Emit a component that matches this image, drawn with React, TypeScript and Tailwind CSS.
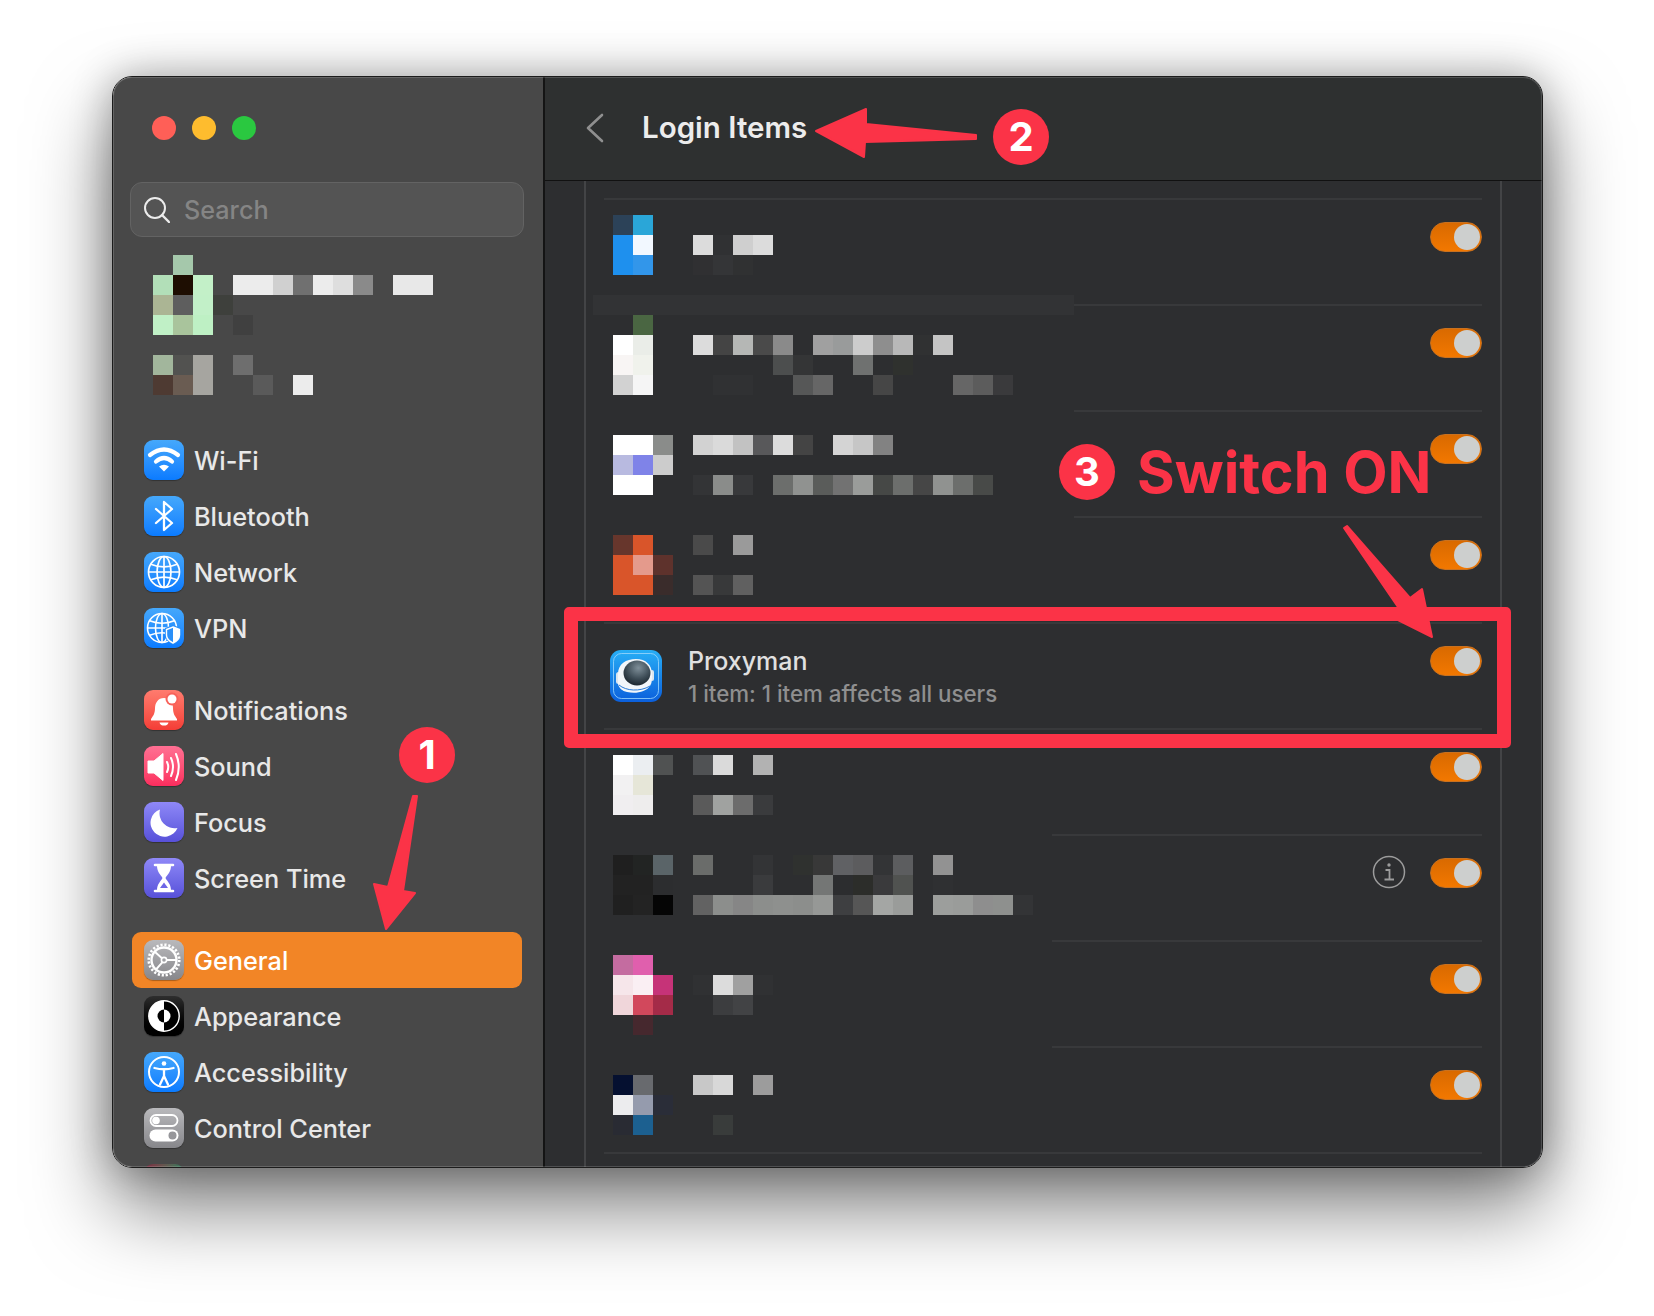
import React from "react";

const font = { fontFamily: "Inter, 'Noto Sans', sans-serif" };

function Mosaic({ rows }: { rows: string[] }) {
  return (
    <div className="grid auto-rows-[20px] grid-cols-[repeat(21,20px)]">
      {rows.flatMap((r, y) => {
        const toks = r.split(" ");
        const out = [];
        for (let x = 0; x < 21; x++) {
          const t = toks[x];
          out.push(<div key={`${y}-${x}`} style={t && t !== "." ? { backgroundColor: `#${t}` } : undefined} />);
        }
        return out;
      })}
    </div>
  );
}

const Glyph = ({ children }: { children: React.ReactNode }) => (
  <svg viewBox="0 0 40 40" className="absolute inset-0 h-10 w-10" fill="none" stroke="none">
    {children}
  </svg>
);

const IconBox = ({ cls, children }: { cls: string; children: React.ReactNode }) => (
  <div className={`relative h-10 w-10 shrink-0 rounded-[9px] shadow-[0_1px_1px_rgba(0,0,0,0.3)] ${cls}`}>
    <Glyph>{children}</Glyph>
  </div>
);

const GlobeLines = ({ cx, r, sw }: { cx: number; r: number; sw: number }) => (
  <g stroke="#fff" strokeWidth={sw} fill="none">
    <circle cx={cx} cy={20} r={r} />
    <ellipse cx={cx} cy={20} rx={r * 0.45} ry={r} />
    <path d={`M${cx} ${20 - r}V${20 + r}M${cx - r} 20H${cx + r}`} />
    <path d={`M${cx - r * 0.85} ${20 - r * 0.5}Q${cx} ${20 - r * 0.15} ${cx + r * 0.85} ${20 - r * 0.5}`} />
    <path d={`M${cx - r * 0.85} ${20 + r * 0.5}Q${cx} ${20 + r * 0.15} ${cx + r * 0.85} ${20 + r * 0.5}`} />
  </g>
);

const blue = "bg-linear-to-b from-[#45a8fb] to-[#0a7bff]";
const purple = "bg-linear-to-b from-[#8f88f7] to-[#5850d9]";
const grey = "bg-linear-to-b from-[#b9b9bc] to-[#87878b]";

const WifiI = () => (
  <IconBox cls={blue}>
    <path d="M6 15Q20 4 34 15" stroke="#fff" strokeWidth="4.2" strokeLinecap="round" />
    <path d="M12 21.5Q20 14.5 28 21.5" stroke="#fff" strokeWidth="4.2" strokeLinecap="round" />
    <path d="M20 31.5L15 26.5Q20 23 25 26.5Z" fill="#fff" />
  </IconBox>
);
const BtI = () => (
  <IconBox cls={blue}>
    <path d="M12 13L28 27L20 34V6L28 13L12 27" stroke="#fff" strokeWidth="2.3" strokeLinejoin="round" strokeLinecap="round" />
  </IconBox>
);
const NetI = () => (
  <IconBox cls={blue}>
    <GlobeLines cx={20} r={15.5} sw={1.7} />
  </IconBox>
);
const VpnI = () => (
  <IconBox cls={blue}>
    <GlobeLines cx={18} r={14.5} sw={1.6} />
    <path d="M29 17L37 20V27Q37 33 29 36.5Q21 33 21 27V20Z" fill="#2a8ff8" />
    <path d="M29 19L35.5 21.5V27Q35.5 32 29 35Q22.500 32 22.500 27V21.500Z" stroke="#fff" strokeWidth="1.4" />
    <path d="M29 19L35.5 21.5V27Q35.5 32 29 35Z" fill="#fff" />
  </IconBox>
);
const BellI = () => (
  <IconBox cls="bg-linear-to-b from-[#ff7b6e] to-[#f43c36]">
    <path d="M20 8C14 8 11 13 11 18C11 24 9 26 7 29V30.500H33V29C31 26 29 24 29 18C29 13 26 8 20 8Z" fill="#fff" />
    <path d="M15.500 32.500H24.500C24 35 22 35.500 20 35.500C18 35.500 16 35 15.500 32.500Z" fill="#fff" />
    <circle cx="28" cy="9" r="6.500" fill="#f8625a" />
    <circle cx="28" cy="9" r="4.500" fill="#fff" />
  </IconBox>
);
const SoundI = () => (
  <IconBox cls="bg-linear-to-b from-[#ff6f93] to-[#fb2c5e]">
    <path d="M4 15H10L19 7.500V34.500L10 27H4Z" fill="#fff" stroke="#fff" strokeLinejoin="round" />
    <path d="M23 16Q25.500 21 23 26M27 12Q31 21 27 30M32 8Q37.500 21 32 34" stroke="#fff" strokeWidth="2" strokeLinecap="round" />
  </IconBox>
);
const MoonI = () => (
  <IconBox cls={purple}>
    <path d="M16 7.500A14 14 0 1 0 33.500 26A15 15 0 0 1 16 7.500Z" fill="#fff" />
  </IconBox>
);
const GlassI = () => (
  <IconBox cls={purple}>
    <path d="M11 7H29M11 33H29" stroke="#fff" strokeWidth="2.6" strokeLinecap="round" />
    <path d="M13 8H27C27 14 23 17 21.500 20C23 23 27 26 27 32H13C13 26 17 23 18.500 20C17 17 13 14 13 8Z" fill="#fff" />
    <path d="M20 24.500L24 30H16Z" fill="#6d66e6" />
  </IconBox>
);
const GearI = () => (
  <IconBox cls={grey}>
    <circle cx="20" cy="20" r="12.500" stroke="#fff" strokeWidth="2.400" />
    <circle cx="20" cy="20" r="15.300" stroke="#fff" strokeWidth="2.600" strokeDasharray="2.200 1.800" />
    <circle cx="20" cy="20" r="2.600" stroke="#fff" strokeWidth="1.600" />
    <path d="M22.600 20H33M18 18.300L10.500 11.500M18.500 22.200L12 29.500" stroke="#fff" strokeWidth="1.900" />
  </IconBox>
);
const AppearI = () => (
  <IconBox cls="bg-linear-to-b from-[#2e2e2e] to-[#000]">
    <circle cx="20" cy="20" r="15.200" fill="#000" stroke="#fff" strokeWidth="1.400" />
    <path d="M20 4.800A15.200 15.200 0 0 0 20 35.200Z" fill="#fff" />
    <path d="M20 13.500A6.500 6.500 0 0 0 20 26.500Z" fill="#000" />
    <path d="M20 13.500A6.500 6.500 0 0 1 20 26.500Z" fill="#fff" />
  </IconBox>
);
const AccessI = () => (
  <IconBox cls={blue}>
    <circle cx="20" cy="20" r="15" stroke="#fff" strokeWidth="2" />
    <circle cx="20" cy="11.500" r="2.300" fill="#fff" />
    <path d="M10.500 16Q20 18.500 29.500 16M20 18V24M20 24L16 32.500M20 24L24 32.500" stroke="#fff" strokeWidth="2.300" strokeLinecap="round" />
  </IconBox>
);
const CtrlI = () => (
  <IconBox cls={grey}>
    <rect x="6.500" y="7" width="27" height="11" rx="5.500" stroke="#fff" strokeWidth="1.800" />
    <circle cx="12" cy="12.500" r="3.800" fill="#fff" />
    <rect x="5.500" y="21.500" width="29" height="12" rx="6" fill="#fff" />
    <circle cx="28.500" cy="27.500" r="4" fill="#96969a" />
  </IconBox>
);

const TextMosaicAvatar = [
  ". a5c8ab",
  "b2dfb8 1e0e02 c3f0c8 . ececec ececec d0d0d0 707070 ececec dedede 8a8a8a . e8e8e8 e8e8e8",
  "abb594 5e5e5e c2f0c8 3e403c",
  "c0f0c6 a9c49c bef0c4 . 404040",
  "",
  "a2b69c 525250 a6a5a0 . 6e6e6e",
  "4e3a32 6a5c52 a6a5a0 . . 5a5a5a . ececec",
];

const NavItem = ({ icon, label, active }: { icon: React.ReactNode; label: string; active?: boolean }) => (
  <div
    className={`ml-[19px] flex h-[56px] w-[390px] items-center gap-[10px] rounded-[9px] pl-[12px] text-[25.300px] font-[450] ${
      active ? "bg-[#f28526] text-white" : "text-[#e8e8e8]"
    }`}
  >
    {icon}
    <span className="pt-[2px]">{label}</span>
  </div>
);

const Toggle = () => (
  <div className="flex h-[30px] w-[52px] shrink-0 items-center justify-end rounded-full border border-[#c9711f] bg-linear-to-b from-[#d96a00] to-[#f27800] pr-px">
    <div className="h-[26px] w-[26px] rounded-full bg-[#cdcfce]" />
  </div>
);

const InfoIcon = () => (
  <svg viewBox="0 0 34 34" className="mr-[24px] mt-[-3px] h-[34px] w-[34px] shrink-0" fill="none" stroke="#9c9c9c">
    <circle cx="17" cy="17" r="15.500" strokeWidth="1.500" />
    <circle cx="17" cy="10" r="1.700" fill="#9c9c9c" stroke="none" />
    <path d="M13.500 15H17.500V24M12.500 24.500H22" strokeWidth="1.800" />
  </svg>
);

type Row = { sep: string; pad: string; rows: string[]; info?: boolean };

const rowsData: Row[] = [
  {
    sep: "ml-0",
    pad: "pt-[15px]",
    rows: [
      "2c4258 2aa6d8",
      "1e90ee f2f8ff . . dcdcdc 303133 cfcfcf dcdcdc",
      "1e90ee 3296ea . . 303032 343537 303132",
    ],
  },
  {
    sep: "ml-[470px]",
    pad: "pt-[9px]",
    rows: [
      ". 4a6642",
      "ffffff eaede8 . . dcdcdc 444444 b5b7b5 4a4a4a 8a8a8a . a0a0a0 999b9b cccccc 8e8e8e b8b8b8 303132 c4c4c4",
      "f8f5f4 f0f2ec . . . . . . 4c4e4e 343536 . . 6f7170 . 2f312e",
      "d2d2d2 f5f5f5 . . . 303133 303133 . . 565757 666666 . . 464646 . . . 666666 5c5c5c 3a3a3c",
    ],
  },
  {
    sep: "ml-[470px]",
    pad: "pt-[23px]",
    rows: [
      "ffffff ffffff 8a8c8a . d2d2d2 dadada c2c2c2 58585a dcdcdc 444444 . d4d4d4 c6c6c6 828282",
      "b8bae0 7f83e8 cccccc",
      "ffffff ffffff . . 333436 8a8c8a 38393b . 6c6e6c 909290 5a5c5a 727272 9a9c9a 464846 6c6e6c 464646 909290 6c6e6c 484a48",
    ],
  },
  {
    sep: "ml-[470px]",
    pad: "pt-[17px]",
    rows: [
      "67362c d9552a . . 4a4a4a . 9a9a9a",
      "d9552a e49a8c 5e322c",
      "d9552a d9552a 3a2c2b . 545454 38393a 606060",
    ],
  },
];

const rowsData2: Row[] = [
  {
    sep: "ml-0",
    pad: "pt-[25px]",
    rows: [
      "ffffff ebeef1 505252 . 505254 dadada . b2b2b2",
      "f2f1f2 e6e6d8",
      "f0eef0 eeeded . . 5a5a5a a0a2a0 6c6c6c 3a3b3d",
    ],
  },
  {
    sep: "ml-[448px]",
    pad: "pt-[19px]",
    info: true,
    rows: [
      "1f1f1f 222423 5a6468 . 6a6c6a . . 333436 . 2f312f 383838 606164 5c5c5e 333436 5c5d5f . 929292",
      "222222 222222 2c2d2f . . . . 3a3b3d . . 747675 2c2d2f 2c2d2a 3a3a3c 505250 . 2f3032",
      "202020 232323 050505 . 626262 8c8e8c 868686 8c8e8c 8e908e 8c8e8c 969896 3e3f41 565656 a4a6a4 9a9c9a . 9c9e9c 9a9c9a 8e8e8e 8e908e 333436",
    ],
  },
  {
    sep: "ml-[448px]",
    pad: "pt-[13px]",
    rows: [
      "c46ca0 e05fad",
      "f6e6ea faeff3 c63378 . 303133 dcdcdc a0a0a0 303133",
      "f0d6da d2485c a42b48 . . 3c3d3f 424345",
      ". 46282e",
    ],
  },
  {
    sep: "ml-[448px]",
    pad: "pt-[27px]",
    rows: [
      "051030 686a6e . . c8c8c8 d8d8d8 . 9c9c9c",
      "ececee 959bad 2a2d38",
      "292b33 1c6090 . . . 393c3b",
    ],
  },
];

const Sep = ({ cls }: { cls: string }) => <div className={`h-[2px] bg-[#38393b] ${cls}`} />;

const ListRow = ({ r }: { r: Row }) => (
  <div className="w-[878px]">
    <Sep cls={r.sep} />
    <div className="flex h-[104px] justify-between">
      <div className={`pl-[9px] ${r.pad}`}>
        <Mosaic rows={r.rows} />
      </div>
      <div className="flex items-start pt-[22px]">
        {r.info && <InfoIcon />}
        <Toggle />
      </div>
    </div>
  </div>
);

const ProxymanIcon = () => (
  <svg viewBox="0 0 52 52" className="h-[52px] w-[52px] shrink-0">
    <defs>
      <linearGradient id="pxBg" x1="0" y1="0" x2="0" y2="1">
        <stop offset="0" stopColor="#27aef6" />
        <stop offset="1" stopColor="#0b5fdc" />
      </linearGradient>
      <radialGradient id="pxVisor" cx="0.55" cy="0.3" r="0.7">
        <stop offset="0" stopColor="#7f8f99" />
        <stop offset="0.6" stopColor="#3f4e58" />
        <stop offset="1" stopColor="#1c2730" />
      </radialGradient>
    </defs>
    <rect width="52" height="52" rx="11" fill="url(#pxBg)" />
    <rect x="3.500" y="3.500" width="45" height="45" rx="8" fill="none" stroke="#9fd8fb" strokeWidth="0.800" />
    <rect x="6" y="22" width="5" height="12" rx="2.500" fill="#dbe6ef" />
    <rect x="40" y="20" width="4" height="11" rx="2" fill="#dbe6ef" />
    <path d="M8 24C8 14 16 9 26 9C36 9 42 15 42 24C42 30 42 33 40 36C36 42 26 44 17 42C12 41 9 38 8 34Z" fill="#f2f6fa" />
    <path d="M9 35C16 41 30 42 40 36" fill="none" stroke="#2a7bd8" strokeWidth="1" />
    <ellipse cx="27" cy="23" rx="13.500" ry="12.500" fill="url(#pxVisor)" />
  </svg>
);

const Red = "#fb3347";

const Badge = ({ n, cls }: { n: string; cls: string }) => (
  <div
    className={`absolute flex h-[56px] w-[56px] items-center justify-center rounded-full bg-[#fb3347] text-[40px] font-bold leading-none text-white ${cls}`}
  >
    {n}
  </div>
);

export default function App() {
  return (
    <div className="relative h-[1316px] w-[1654px] overflow-hidden bg-white pl-[112px] pt-[76px]" style={font}>
      <div className="relative flex h-[1092px] w-[1431px] overflow-hidden rounded-[20px] border border-[#1c1c1c] shadow-[0_40px_80px_rgba(0,0,0,0.5),0_0_40px_rgba(0,0,0,0.3)]">
        {/* Sidebar */}
        <aside className="flex h-full w-[432px] shrink-0 flex-col overflow-hidden border-r-2 border-[#141414] bg-[#484848]">
          <div className="ml-[39px] mt-[39px] flex gap-[16px]">
            <div className="h-6 w-6 rounded-full bg-[#ff5f57]" />
            <div className="h-6 w-6 rounded-full bg-[#febc2e]" />
            <div className="h-6 w-6 rounded-full bg-[#2ac840]" />
          </div>
          <div className="ml-[17px] mt-[42px] flex h-[55px] w-[394px] shrink-0 items-center rounded-[12px] border border-[#636363] bg-[#545454] pl-[13px]">
            <svg viewBox="0 0 26 26" className="h-[26px] w-[26px]" fill="none" stroke="#ececec" strokeWidth="2" strokeLinecap="round">
              <circle cx="11" cy="11" r="10" />
              <path d="M18 18L25 25" strokeWidth="2.400" />
            </svg>
            <span className="ml-[14px] pt-[3px] text-[25.200px] font-[450] text-[#858585]">Search</span>
          </div>
          <div className="ml-[40px] mt-[18px] shrink-0">
            <Mosaic rows={TextMosaicAvatar} />
          </div>
          <div className="mt-[37px] flex flex-col">
            <NavItem icon={<WifiI />} label="Wi-Fi" />
            <NavItem icon={<BtI />} label="Bluetooth" />
            <NavItem icon={<NetI />} label="Network" />
            <NavItem icon={<VpnI />} label="VPN" />
          </div>
          <div className="mt-[26px] flex flex-col">
            <NavItem icon={<BellI />} label="Notifications" />
            <NavItem icon={<SoundI />} label="Sound" />
            <NavItem icon={<MoonI />} label="Focus" />
            <NavItem icon={<GlassI />} label="Screen Time" />
          </div>
          <div className="mt-[26px] flex flex-col">
            <NavItem icon={<GearI />} label="General" active />
            <NavItem icon={<AppearI />} label="Appearance" />
            <NavItem icon={<AccessI />} label="Accessibility" />
            <NavItem icon={<CtrlI />} label="Control Center" />
            <div className="ml-[31px] mt-[8px] h-10 w-10 shrink-0 rounded-[9px] bg-linear-to-r from-[#7c2340] to-[#1f7a5c]" />
          </div>
        </aside>

        {/* Main */}
        <main className="relative flex min-w-0 flex-1 flex-col bg-[#2d2e30]">
          <header className="flex h-[104px] shrink-0 items-center border-b border-[#111] bg-[#2e3030] pb-[2px]">
            <svg viewBox="0 0 18 30" className="ml-[41px] h-[30px] w-[18px]" fill="none" stroke="#8f8f8f" strokeWidth="2.600" strokeLinecap="round" strokeLinejoin="round">
              <path d="M16 2L2 15L16 28" />
            </svg>
            <h1 className="ml-[38px] text-[29.500px] font-semibold text-[#ececec]">Login Items</h1>
          </header>
          <div className="ml-[39px] flex w-[918px] flex-1 flex-col items-center border-x-2 border-[#434446] pt-[17px]">
            {rowsData.map((r, i) => (
              <ListRow key={i} r={r} />
            ))}
            <div className="w-[878px]">
              <Sep cls="ml-0" />
              <div className="flex h-[104px] justify-between">
                <div className="flex items-start pl-[6px] pt-[26px]">
                  <ProxymanIcon />
                  <div className="ml-[26px] mt-[-6px]">
                    <div className="text-[25px] font-[450] leading-[34px] text-[#e0e0e0]">Proxyman</div>
                    <div className="text-[22.300px] font-[450] leading-[32px] text-[#8f8f8f]">1 item: 1 item affects all users</div>
                  </div>
                </div>
                <div className="pt-[22px]">
                  <Toggle />
                </div>
              </div>
            </div>
            {rowsData2.map((r, i) => (
              <ListRow key={i} r={r} />
            ))}
            <Sep cls="w-[878px]" />
          </div>
          {/* faint band from the censored block */}
          <div className="absolute left-[48px] top-[218px] h-[20px] w-[481px] bg-[#323335]" />
        </main>
        <div className="pointer-events-none absolute inset-0 rounded-[19px] shadow-[inset_0_0_0_1px_rgba(255,255,255,0.16)]" />
      </div>

      {/* Annotations */}
      <svg viewBox="0 0 1654 1316" className="pointer-events-none absolute left-0 top-0 h-[1316px] w-[1654px]" fill={Red} stroke={Red} strokeWidth="2" strokeLinejoin="round">
        <path d="M413 796L417 796L403 891L415 893L386 929L374 884L388 887Z" />
        <path d="M816 131L866 109L866 124L976 135L976 139L865 142L864 157Z" />
        <path d="M1344 528L1347 526L1410 598L1422 589L1432 637L1388 615L1400 610Z" />
      </svg>
      <div className="absolute left-[564px] top-[607px] h-[141px] w-[947px] rounded-[5px] border-[14px] border-[#fb3347]" />
      <Badge n="1" cls="left-[399px] top-[727px]" />
      <Badge n="2" cls="left-[993px] top-[109px]" />
      <Badge n="3" cls="left-[1059px] top-[444px]" />
      <div className="absolute left-[1137px] top-[437px] whitespace-nowrap text-[57.600px] font-bold leading-[70px] text-[#fb3347]">Switch ON</div>
    </div>
  );
}
